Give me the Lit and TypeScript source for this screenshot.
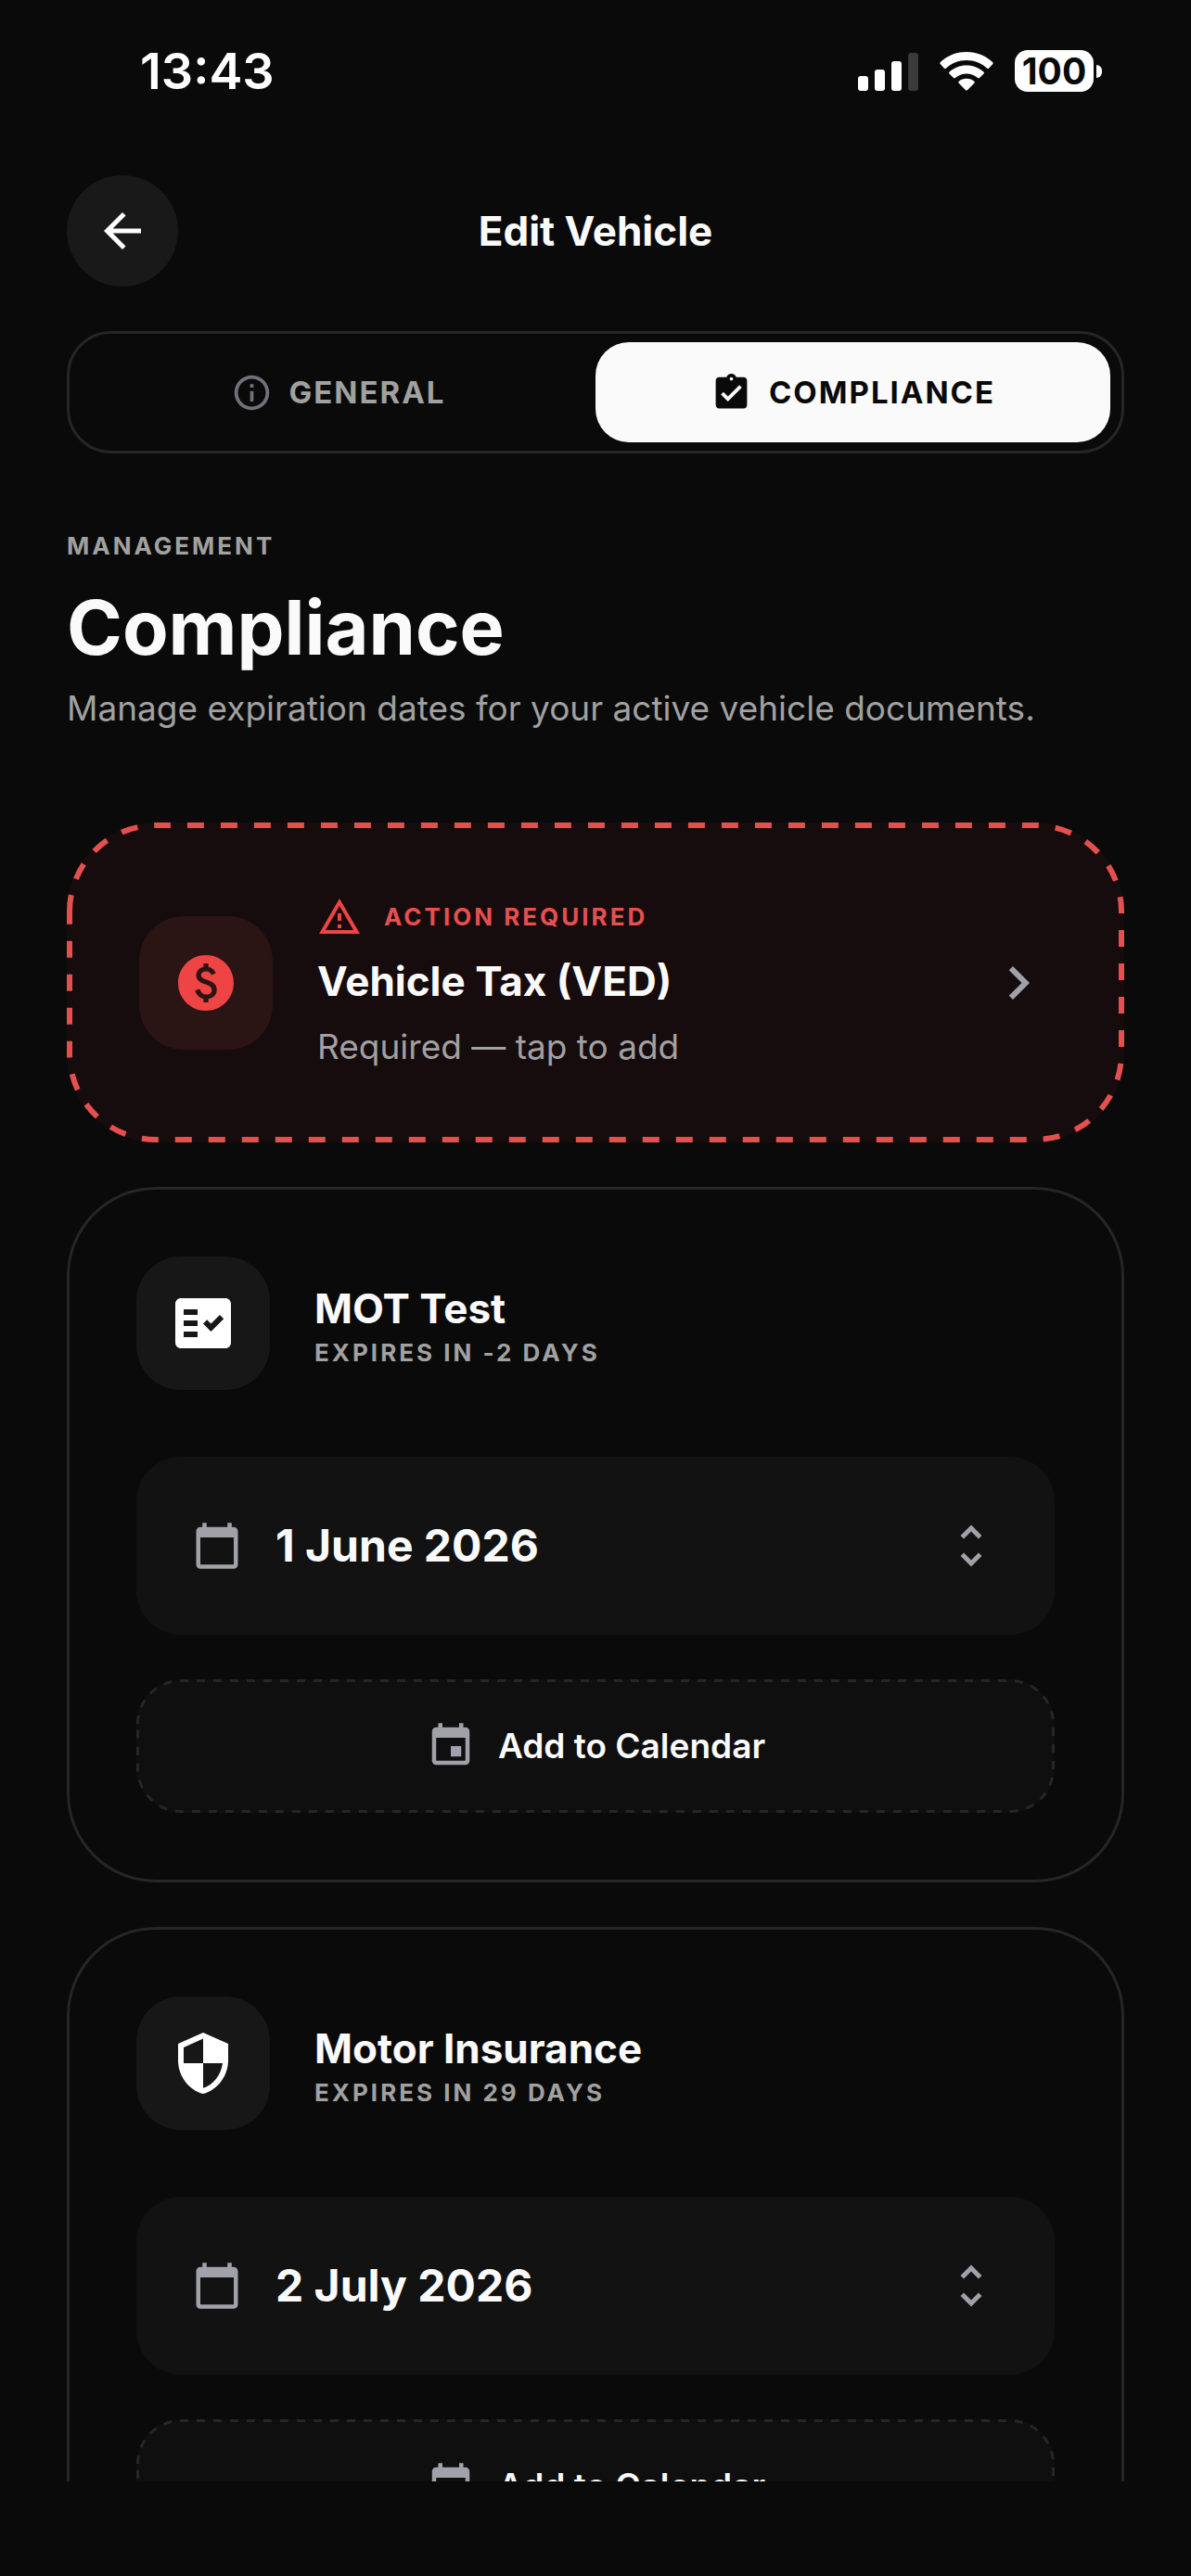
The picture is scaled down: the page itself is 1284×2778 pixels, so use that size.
import { LitElement, html, svg, css } from "lit";
import { customElement, property, state } from "lit/decorators.js";

const ICONS: Record<string, string> = {
  back: "M20 11H7.83l5.59-5.59L12 4l-8 8 8 8 1.41-1.41L7.83 13H20v-2z",
  info: "M11 7h2v2h-2zm0 4h2v6h-2zm1-9C6.48 2 2 6.48 2 12s4.48 10 10 10 10-4.48 10-10S17.52 2 12 2zm0 18c-4.41 0-8-3.59-8-8s3.59-8 8-8 8 3.59 8 8-3.59 8-8 8z",
  clipboard:
    "M19 3h-4.18C14.4 1.84 13.3 1 12 1c-1.3 0-2.4.84-2.82 2H5c-1.1 0-2 .9-2 2v14c0 1.1.9 2 2 2h14c1.1 0 2-.9 2-2V5c0-1.1-.9-2-2-2zm-7 0c.55 0 1 .45 1 1s-.45 1-1 1-1-.45-1-1 .45-1 1-1zm-2 14l-4-4 1.41-1.41L10 14.17l6.59-6.59L18 9l-8 8z",
  warning: "M12 5.99L19.53 19H4.47L12 5.99M12 2L1 21h22L12 2zm1 14h-2v2h2v-2zm0-6h-2v4h2v-4z",
  money:
    "M12 2C6.48 2 2 6.48 2 12s4.48 10 10 10 10-4.48 10-10S17.52 2 12 2zm.88 15.76V19h-1.75v-1.29c-.74-.18-2.39-.77-3.02-2.96l1.65-.67c.06.22.58 2.09 2.4 2.09.93 0 1.98-.48 1.98-1.61 0-.96-.7-1.46-2.28-2.03-1.1-.39-3.35-1.03-3.35-3.31 0-.1.01-2.4 2.62-2.96V5h1.75v1.24c1.84.32 2.51 1.79 2.66 2.23l-1.58.67c-.11-.35-.59-1.34-1.9-1.34-.7 0-1.81.37-1.81 1.39 0 .95.86 1.31 2.64 1.9 2.4.83 3.01 2.05 3.01 3.45 0 2.63-2.5 3.13-3.02 3.22z",
  chevron: "M10 6L8.59 7.41 13.17 12l-4.58 4.59L10 18l6-6z",
  checklist:
    "M20 3H4c-1.1 0-2 .9-2 2v14c0 1.1.9 2 2 2h16c1.1 0 2-.9 2-2V5c0-1.1-.9-2-2-2zM10 17H5v-2h5v2zm0-4H5v-2h5v2zm0-4H5V7h5v2zm4.82 6L12 12.16l1.41-1.41 1.41 1.42L17.99 9l1.42 1.42L14.82 15z",
  shield:
    "M12 1L3 5v6c0 5.55 3.84 10.74 9 12 5.16-1.26 9-6.45 9-12V5l-9-4zm0 10.99h7c-.53 4.12-3.28 7.79-7 8.94V12H5V6.3l7-3.11v8.8z",
  today:
    "M20 3h-1V1h-2v2H7V1H5v2H4c-1.1 0-2 .9-2 2v16c0 1.1.9 2 2 2h16c1.1 0 2-.9 2-2V5c0-1.1-.9-2-2-2zm0 18H4V8h16v13z",
  unfold:
    "M12 5.83L15.17 9l1.41-1.41L12 3 7.41 7.59 8.83 9 12 5.83zm0 12.34L8.83 15l-1.41 1.41L12 21l4.59-4.59L15.17 15 12 18.17z",
  event:
    "M17 12h-5v5h5v-5zM16 1v2H8V1H6v2H5c-1.11 0-1.99.9-1.99 2L3 19c0 1.1.89 2 2 2h14c1.1 0 2-.9 2-2V5c0-1.1-.9-2-2-2h-1V1h-2zm3 18H5V8h14v11z",
};

const icon = (name: string, cls: string) =>
  html`<svg class="icon ${cls}" viewBox="0 0 24 24" aria-hidden="true">${svg`<path d=${ICONS[name]}></path>`}</svg>`;

const shared = css`
  *,
  *::before {
    box-sizing: border-box;
  }
  button {
    margin: 0;
    padding: 0;
    border: 0;
    background: none;
    color: inherit;
    font: inherit;
    text-align: left;
    cursor: pointer;
  }
  h1,
  h2,
  h3,
  p {
    margin: 0;
  }
  .icon {
    display: block;
    flex: none;
    fill: currentColor;
  }
  .tile {
    flex: none;
    display: grid;
    place-items: center;
    width: 144px;
    height: 144px;
    border-radius: 48px;
  }
  .i72 {
    width: 72px;
    height: 72px;
  }
  .i60 {
    width: 60px;
    height: 60px;
  }
  .i54 {
    width: 54px;
    height: 54px;
  }
  .i48 {
    width: 48px;
    height: 48px;
  }
  .i45 {
    width: 45px;
    height: 45px;
  }
`;

/* Dashed outline whose dash pattern begins at the foot of the top-left corner. */
@customElement("dash-frame")
class DashFrame extends LitElement {
  @property({ type: Number }) weight = 3;
  @property({ type: Number }) radius = 48;

  static styles = css`
    :host {
      position: absolute;
      inset: 0;
      pointer-events: none;
    }
    .frame {
      display: block;
      width: 100%;
      height: 100%;
      fill: none;
      stroke: currentColor;
    }
    .line {
      width: calc(100% - var(--weight));
      height: calc(100% - var(--weight));
    }
  `;

  render() {
    const w = this.weight;
    const r = this.radius;
    const h = w / 2;
    const arc = r - h;
    const dash = w * 3;
    return html`<svg class="frame" aria-hidden="true" style="--weight:${w}px">
      <clipPath id="rest">
        <rect x=${r} y="0" width="100%" height="100%"></rect>
        <rect x="0" y=${r} width="100%" height="100%"></rect>
      </clipPath>
      <path d="M${h} ${r}A${arc} ${arc} 0 0 1 ${r} ${h}" stroke-width=${w} stroke-dasharray="${dash} ${dash}"></path>
      <g clip-path="url(#rest)">
        <rect
          class="line"
          x=${h}
          y=${h}
          rx=${arc}
          stroke-width=${w}
          stroke-dasharray="${dash} ${dash}"
          stroke-dashoffset=${(arc * Math.PI) / 2}
        ></rect>
      </g>
    </svg>`;
  }
}

@customElement("status-bar")
class StatusBar extends LitElement {
  static styles = css`
    :host {
      display: flex;
      flex: none;
      align-items: center;
      justify-content: space-between;
      height: 153px;
      padding: 0 96px 0 151px;
      color: #fff;
    }
    .time {
      font-size: 54px;
      font-weight: 600;
      line-height: 60px;
    }
    .system {
      display: flex;
      align-items: center;
      gap: 23px;
    }
    .signal {
      display: block;
      width: 65px;
      height: 42px;
      fill: #fff;
    }
    .off {
      fill: #3a3a3a;
    }
    .wifi {
      display: block;
      width: 58px;
      height: 42px;
      fill: #fff;
    }
    .battery {
      display: flex;
      align-items: center;
      gap: 3px;
    }
    .level {
      width: 85px;
      height: 45px;
      border-radius: 14px;
      background: #fff;
      color: #0a0a0a;
      font-size: 39px;
      font-weight: 700;
      line-height: 45px;
      text-align: center;
    }
    .nub {
      width: 6px;
      height: 14px;
      border-radius: 0 6px 6px 0;
      background: #fff;
    }
  `;

  render() {
    return html`
      <span class="time">13:43</span>
      <div class="system">
        <svg class="signal" viewBox="0 0 65 42" aria-hidden="true">
          <rect x="0" y="26" width="11" height="16" rx="3"></rect>
          <rect x="18" y="19" width="11" height="23" rx="3"></rect>
          <rect x="36" y="10" width="11" height="32" rx="3"></rect>
          <rect class="off" x="54" y="1" width="11" height="41" rx="3"></rect>
        </svg>
        <svg class="wifi" viewBox="0 0 58 42" aria-hidden="true">
          <path d="M29 0C18 0 8 4 .7 11.300Q0 12.200.7 13L5 17.700Q5.900 18.500 6.800 17.700C12.800 12 20.500 8.900 29 8.900S45.200 12 51.200 17.700Q52.100 18.500 53 17.700L57.300 13Q58 12.200 57.300 11.300C50 4 40 0 29 0Z"></path>
          <path d="M29 14.600C21.800 14.600 15.300 17.300 10.400 21.800Q9.600 22.600 10.400 23.400L15 28Q15.900 28.800 16.800 28C20.100 25.100 24.300 23.400 29 23.400S37.900 25.100 41.200 28Q42.100 28.800 43 28L47.600 23.400Q48.400 22.600 47.600 21.800C42.700 17.300 36.200 14.600 29 14.600Z"></path>
          <path d="M29 28.800C25.700 28.800 22.700 30 20.500 31.900Q19.700 32.700 20.500 33.500L28.100 41.200Q29 42 29.900 41.200L37.500 33.500Q38.300 32.700 37.500 31.900C35.300 30 32.300 28.800 29 28.800Z"></path>
        </svg>
        <div class="battery"><span class="level">100</span><span class="nub"></span></div>
      </div>
    `;
  }
}

@customElement("document-card")
class DocumentCard extends LitElement {
  @property() name = "";
  @property() expiry = "";
  @property() date = "";
  @property() glyph = "";

  static styles = [
    shared,
    css`
      :host {
        display: block;
      }
      .card {
        display: flex;
        flex-direction: column;
        padding: 72px;
        border: 3px solid #262626;
        border-radius: 96px;
      }
      .head {
        display: flex;
        align-items: center;
        gap: 48px;
        margin-bottom: 72px;
      }
      .tile {
        background: #171717;
        color: #fff;
      }
      .name {
        font-size: 44px;
        font-weight: 700;
        line-height: 64px;
      }
      .expiry {
        color: #a1a1a1;
        font-size: 26px;
        font-weight: 700;
        line-height: 32px;
        letter-spacing: 3px;
        text-transform: uppercase;
      }
      .date {
        display: flex;
        align-items: center;
        gap: 36px;
        min-height: 192px;
        margin-bottom: 48px;
        padding: 0 60px;
        border-radius: 48px;
        background: #121212;
      }
      .muted {
        color: #a1a1aa;
      }
      .value {
        flex: 1;
        font-size: 48px;
        font-weight: 700;
        line-height: 60px;
      }
      .add {
        position: relative;
        display: flex;
        align-items: center;
        justify-content: center;
        gap: 24px;
        min-height: 144px;
        border-radius: 48px;
        background: #0f0f0f;
        font-size: 37px;
        font-weight: 600;
        line-height: 54px;
      }
      .outline {
        color: #262626;
      }
    `,
  ];

  render() {
    return html`
      <article class="card">
        <div class="head">
          <div class="tile">${icon(this.glyph, "i72")}</div>
          <div>
            <h3 class="name">${this.name}</h3>
            <p class="expiry">${this.expiry}</p>
          </div>
        </div>
        <button class="date" type="button">
          ${icon("today", "i54 muted")}
          <span class="value">${this.date}</span>
          ${icon("unfold", "i60 muted")}
        </button>
        <button class="add" type="button">
          <dash-frame class="outline" .weight=${3} .radius=${48}></dash-frame>
          ${icon("event", "i54 muted")}
          <span>Add to Calendar</span>
        </button>
      </article>
    `;
  }
}

@customElement("app-root")
class AppRoot extends LitElement {
  @state() private tab = "compliance";

  private documents = [
    { name: "MOT Test", expiry: "Expires in -2 days", date: "1 June 2026", glyph: "checklist" },
    { name: "Motor Insurance", expiry: "Expires in 29 days", date: "2 July 2026", glyph: "shield" },
  ];

  static styles = [
    shared,
    css`
      :host {
        display: flex;
        flex-direction: column;
        height: 100vh;
        background: #0a0a0a;
        color: #fafafa;
        font-family: Inter, "Liberation Sans", sans-serif;
      }
      .bar {
        flex: none;
        display: grid;
        grid-template-columns: 120px 1fr 120px;
        align-items: center;
        padding: 36px 72px 48px;
      }
      .back {
        display: grid;
        place-items: center;
        height: 120px;
        border-radius: 50%;
        background: #191919;
        color: #fff;
      }
      .title {
        font-size: 44px;
        font-weight: 700;
        line-height: 54px;
        text-align: center;
      }
      .tabs {
        flex: none;
        display: grid;
        grid-template-columns: 1fr 1fr;
        margin: 0 72px;
        padding: 9px 12px;
        border: 3px solid #262626;
        border-radius: 48px;
      }
      .tab {
        display: flex;
        align-items: center;
        justify-content: center;
        gap: 18px;
        min-height: 108px;
        border-radius: 36px;
        color: #a1a1a1;
        font-size: 33px;
        font-weight: 700;
        line-height: 48px;
        letter-spacing: 2px;
        text-transform: uppercase;
      }
      .tab .icon {
        color: #71717a;
      }
      .tab[aria-selected="true"],
      .tab[aria-selected="true"] .icon {
        color: #0a0a0a;
      }
      .tab[aria-selected="true"] {
        background: #fafafa;
      }
      .content {
        flex: 1;
        min-height: 0;
        overflow: hidden;
        margin-bottom: 102px;
        padding: 84px 72px 0;
      }
      .eyebrow {
        margin-bottom: 24px;
        color: #a1a1a1;
        font-size: 26px;
        font-weight: 700;
        line-height: 32px;
        letter-spacing: 3px;
        text-transform: uppercase;
      }
      .heading {
        margin-bottom: 12px;
        font-size: 81px;
        font-weight: 700;
        line-height: 96px;
      }
      .intro {
        margin-bottom: 96px;
        color: #a1a1a1;
        font-size: 37px;
        line-height: 54px;
      }
      .list {
        display: flex;
        flex-direction: column;
        gap: 48px;
      }
      .alert {
        position: relative;
        display: flex;
        align-items: center;
        gap: 48px;
        width: 100%;
        padding: 78px;
        border-radius: 96px;
        background: #160b0d;
      }
      .outline {
        color: #e5504f;
      }
      .alert .tile {
        background: #2b1414;
        color: #ef4444;
      }
      .copy {
        flex: 1;
        display: flex;
        flex-direction: column;
        gap: 18px;
      }
      .flag {
        display: flex;
        align-items: center;
        gap: 24px;
        color: #e5504f;
        font-size: 26px;
        font-weight: 700;
        line-height: 48px;
        letter-spacing: 3px;
        text-transform: uppercase;
      }
      .flag .icon {
        color: #ef4444;
      }
      .subject {
        font-size: 44px;
        font-weight: 700;
        line-height: 54px;
      }
      .note {
        color: #a1a1a1;
        font-size: 37px;
        line-height: 51px;
      }
      .chevron {
        color: #a1a1aa;
      }
    `,
  ];

  private tabButton(id: string, label: string, glyph: string) {
    return html`<button
      class="tab"
      type="button"
      role="tab"
      aria-selected=${this.tab === id ? "true" : "false"}
      @click=${() => (this.tab = id)}
    >
      ${icon(glyph, "i45")}<span>${label}</span>
    </button>`;
  }

  render() {
    return html`
      <status-bar></status-bar>
      <header class="bar">
        <button class="back" type="button" aria-label="Back">${icon("back", "i60")}</button>
        <h1 class="title">Edit Vehicle</h1>
      </header>
      <div class="tabs" role="tablist">
        ${this.tabButton("general", "General", "info")}
        ${this.tabButton("compliance", "Compliance", "clipboard")}
      </div>
      <main class="content">
        <p class="eyebrow">Management</p>
        <h2 class="heading">Compliance</h2>
        <p class="intro">Manage expiration dates for your active vehicle documents.</p>
        <div class="list">
          <button class="alert" type="button">
            <dash-frame class="outline" .weight=${6} .radius=${96}></dash-frame>
            <span class="tile">${icon("money", "i72")}</span>
            <span class="copy">
              <span class="flag">${icon("warning", "i48")}<span>Action required</span></span>
              <span class="subject">Vehicle Tax (VED)</span>
              <span class="note">Required — tap to add</span>
            </span>
            ${icon("chevron", "i72 chevron")}
          </button>
          ${this.documents.map(
            (d) => html`<document-card
              .name=${d.name}
              .expiry=${d.expiry}
              .date=${d.date}
              .glyph=${d.glyph}
            ></document-card>`,
          )}
        </div>
      </main>
    `;
  }
}
